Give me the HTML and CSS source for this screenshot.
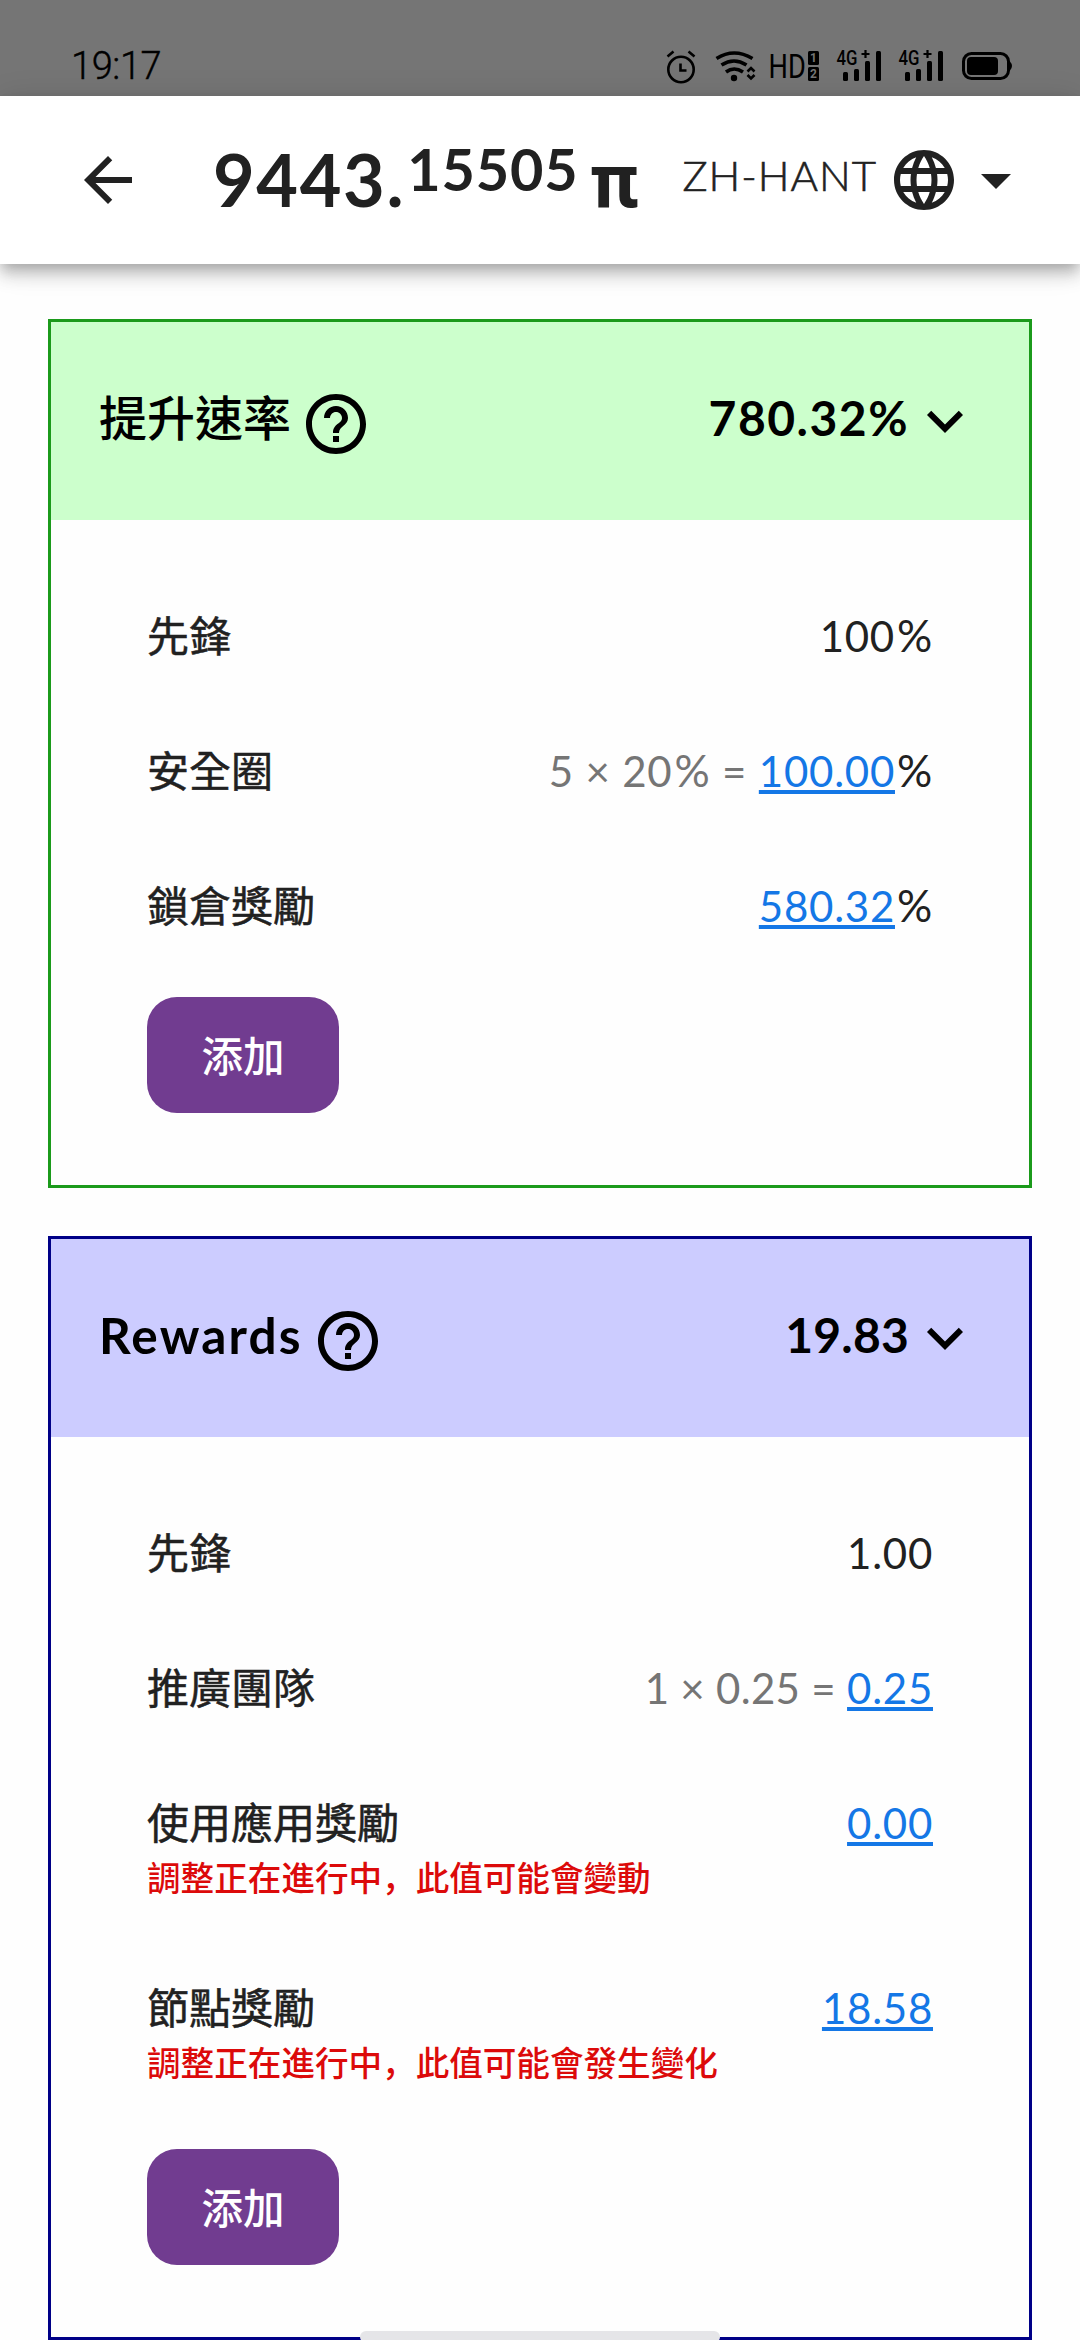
FILE: index.html
```html
<!DOCTYPE html>
<html lang="zh-Hant">
<head>
<meta charset="utf-8">
<title>Pi</title>
<link rel="stylesheet" href="styles.css">
</head>
<body>
<div class="statusbar">
  <span class="clock">19:17</span>
  <svg class="status-icons" viewBox="0 0 350 36" width="350" height="36">
    <!-- alarm -->
    <g fill="none" stroke="#000" stroke-width="2.6">
      <circle cx="18" cy="19.500" r="12.700"/>
      <path d="M17.500 13.500v7h6M4.500 6.500l6-5M31.500 6.500l-6-5"/>
    </g>
    <!-- wifi -->
    <g fill="none" stroke="#000" stroke-width="3.600">
      <path d="M53.500 8.500q17.500-11 36 0M58.500 15q12.500-8 25 0M63 22q8-6 17 0"/>
      <path d="M84.500 21.500l3.500-3.500 3.500 3.500M84.500 25l3.500 3.500 3.500-3.500" stroke-width="2.600"/>
    </g>
    <circle cx="71" cy="28" r="3.200"/>
    <!-- HD with SIM numbers -->
    <text class="hd" transform="translate(105.500 28) scale(.8 1)">HD</text>
    <rect x="145" y="1" width="11" height="14" rx="1.500"/>
    <rect x="145" y="17" width="11" height="14" rx="1.500"/>
    <text class="sim" x="150.500" y="12.300">1</text>
    <text class="sim" x="150.500" y="28.300">2</text>
    <!-- signal -->
    <g id="signal">
      <text class="net" transform="translate(173.500 15) scale(.84 1)">4G</text>
      <path d="M198.500 4h8M202.500 0v8" stroke="#000" stroke-width="2.200"/>
      <rect x="180" y="22" width="5" height="9" rx="1.500"/>
      <rect x="191" y="19" width="5" height="12" rx="1.500"/>
      <rect x="202" y="11" width="5" height="20" rx="1.500"/>
      <rect x="213" y="1" width="5" height="30" rx="1.500"/>
    </g>
    <use href="#signal" x="62"/>
    <!-- battery -->
    <rect x="300.500" y="3.500" width="45" height="25" rx="8" fill="none" stroke="#000" stroke-width="3"/>
    <rect x="304" y="7" width="31" height="18" rx="4"/>
    <path d="M347 11.500q4 4.500 0 9z"/>
  </svg>
</div>

<header class="appbar">
  <svg class="icon" viewBox="0 0 24 24"><path d="M20 11H7.830l5.590-5.590L12 4l-8 8 8 8 1.410-1.410L7.830 13H20v-2z"/></svg>
  <div class="balance"><span class="whole">9443.</span><span class="fraction">15505</span><span class="pi">π</span></div>
  <div class="language">
    <span class="code">ZH-HANT</span>
    <svg class="icon" viewBox="0 0 24 24"><path d="M11.990 2C6.470 2 2 6.480 2 12s4.470 10 9.990 10C17.520 22 22 17.520 22 12S17.520 2 11.990 2zm6.930 6h-2.950c-.320-1.250-.780-2.450-1.380-3.560 1.840.630 3.370 1.910 4.330 3.560zM12 4.040c.830 1.200 1.480 2.530 1.910 3.960h-3.820c.430-1.430 1.080-2.760 1.910-3.960zM4.260 14C4.100 13.360 4 12.690 4 12s.100-1.360.260-2h3.380c-.080.660-.140 1.320-.140 2s.060 1.340.140 2H4.260zm.820 2h2.950c.320 1.250.780 2.450 1.380 3.560-1.840-.630-3.370-1.900-4.330-3.560zm2.950-8H5.080c.960-1.660 2.490-2.930 4.330-3.560C8.810 5.550 8.350 6.750 8.030 8zM12 19.960c-.830-1.200-1.480-2.530-1.910-3.960h3.820c-.430 1.430-1.080 2.760-1.910 3.960zM14.340 14H9.660c-.090-.660-.160-1.320-.160-2s.070-1.350.160-2h4.680c.090.650.160 1.320.160 2s-.070 1.340-.160 2zm.250 5.560c.600-1.110 1.060-2.310 1.380-3.560h2.950c-.960 1.650-2.490 2.930-4.330 3.560zM16.360 14c.080-.660.140-1.320.140-2s-.060-1.340-.140-2h3.380c.160.640.260 1.310.260 2s-.100 1.360-.260 2h-3.380z"/></svg>
    <svg class="icon" viewBox="0 0 24 24"><path d="M7 10l5 5 5-5z"/></svg>
  </div>
</header>

<main class="cards">
  <section class="card card-rate">
    <div class="card-head">
      <h2>提升速率</h2>
      <svg class="icon help" viewBox="0 0 24 24"><path d="M11 18h2v-2h-2v2zm1-16C6.480 2 2 6.480 2 12s4.480 10 10 10 10-4.480 10-10S17.520 2 12 2zm0 18c-4.410 0-8-3.590-8-8s3.590-8 8-8 8 3.590 8 8-3.590 8-8 8zm0-14c-2.210 0-4 1.790-4 4h2c0-1.100.900-2 2-2s2 .900 2 2c0 2-3 1.750-3 5h2c0-2.250 3-2.500 3-5 0-2.210-1.790-4-4-4z"/></svg>
      <span class="total">780.32%</span>
      <svg class="icon" viewBox="0 0 24 24"><path d="M16.590 8.590L12 13.170 7.410 8.590 6 10l6 6 6-6z"/></svg>
    </div>
    <div class="card-body">
      <div class="row"><span class="label">先鋒</span><span class="value">100<span class="percent">%</span></span></div>
      <div class="row"><span class="label">安全圈</span><span class="value"><span class="formula">5 × 20<span class="percent">%</span> = </span><a class="link">100.00</a><span class="percent">%</span></span></div>
      <div class="row"><span class="label">鎖倉獎勵</span><span class="value"><a class="link">580.32</a><span class="percent">%</span></span></div>
      <button class="add">添加</button>
    </div>
  </section>

  <section class="card card-rewards">
    <div class="card-head">
      <h2>Rewards</h2>
      <svg class="icon help" viewBox="0 0 24 24"><path d="M11 18h2v-2h-2v2zm1-16C6.480 2 2 6.480 2 12s4.480 10 10 10 10-4.480 10-10S17.520 2 12 2zm0 18c-4.410 0-8-3.590-8-8s3.590-8 8-8 8 3.590 8 8-3.590 8-8 8zm0-14c-2.210 0-4 1.790-4 4h2c0-1.100.900-2 2-2s2 .900 2 2c0 2-3 1.750-3 5h2c0-2.250 3-2.500 3-5 0-2.210-1.790-4-4-4z"/></svg>
      <span class="total">19.83</span>
      <svg class="icon" viewBox="0 0 24 24"><path d="M16.590 8.590L12 13.170 7.410 8.590 6 10l6 6 6-6z"/></svg>
    </div>
    <div class="card-body">
      <div class="row"><span class="label">先鋒</span><span class="value">1.00</span></div>
      <div class="row"><span class="label">推廣團隊</span><span class="value"><span class="formula">1 × 0.25 = </span><a class="link">0.25</a></span></div>
      <div class="row"><span class="label">使用應用獎勵</span><span class="value"><a class="link">0.00</a></span><p class="note" lang="zh-Hans">調整正在進行中，此值可能會變動</p></div>
      <div class="row"><span class="label">節點獎勵</span><span class="value"><a class="link">18.58</a></span><p class="note" lang="zh-Hans">調整正在進行中，此值可能會發生變化</p></div>
      <button class="add">添加</button>
    </div>
  </section>
</main>
<div class="home-indicator"></div>
</body>
</html>
```

FILE: styles.css
```css
* { box-sizing: border-box; margin: 0; padding: 0; }

body {
  width: 1080px;
  height: 2340px;
  overflow: hidden;
  background: #fefefe;
  color: #212121;
  font-family: Lato, "Noto Sans CJK SC", sans-serif;
  font-size: 42px;
}

.icon { width: 72px; height: 72px; flex: none; fill: currentColor; display: block; }

.statusbar {
  height: 96px;
  padding: 34px 67px 0 71px;
  background: #757575;
  color: #000;
  display: flex;
  justify-content: space-between;
}
.clock { font-family: Roboto, sans-serif; font-size: 38px; font-weight: 300; line-height: 62px; letter-spacing: -.400px; padding-top: 1px; -webkit-text-stroke: .4px currentColor; }
.status-icons { margin-top: 16px; overflow: visible; }
.hd { font: 400 34px Roboto, sans-serif; }
.net { font: 500 20px Roboto, sans-serif; }
.sim { font: 700 12px Roboto, sans-serif; fill: #757575; text-anchor: middle; }

.appbar {
  position: relative;
  height: 168px;
  padding: 0 48px 0 72px;
  display: flex;
  align-items: center;
  background: #fff;
  box-shadow: 0 6px 12px -3px rgba(0,0,0,.2), 0 12px 15px 0 rgba(0,0,0,.14), 0 3px 30px 0 rgba(0,0,0,.12);
}
.balance {
  display: flex;
  align-items: baseline;
  margin-left: 69px;
  font-weight: 700;
  font-size: 72px;
  line-height: 96px;
  letter-spacing: 1.600px;
}
.fraction { font-size: 57.600px; line-height: 60px; letter-spacing: .900px; margin-left: 2px; transform: translateY(-16px); }
.pi { margin-left: 11px; font-family: Roboto, sans-serif; font-size: 76px; letter-spacing: 0; }
.language { margin-left: auto; display: flex; align-items: center; }
.code {
  font-weight: 300;
  letter-spacing: 1px;
  line-height: 60px;
  margin: -10px 11px 0 0;
  -webkit-text-stroke: .6px currentColor;
}

.cards { padding: 55px 48px 0; display: flex; flex-direction: column; gap: 48px; }
.card { border: 3px solid; background: #fefefe; }
.card-rate { border-color: #1b9a1b; }
.card-rewards { border-color: #000087; }
.card-head {
  height: 198px;
  padding: 0 48px;
  display: flex;
  align-items: center;
  color: #000;
  font-size: 48px;
  font-weight: 700;
}
.card-rate .card-head { background: #ccffcc; }
.card-rewards .card-head { background: #ccccff; }
.card-head h2 { font-size: 48px; line-height: 60px; margin-top: -6px; }
.card-rate h2 { font-weight: 500; }
.card-rewards h2 { font-size: 49.500px; font-weight: 700; letter-spacing: 2.200px; }
.help { margin: 6px 0 0 9px; }
.total { margin-left: auto; line-height: 60px; letter-spacing: .200px; margin-top: -6px; }
.card-rate .total { letter-spacing: 1.500px; }

.card-body { padding: 86px 96px 72px; }
.row {
  display: grid;
  grid-template-columns: 1fr auto;
  line-height: 60px;
  margin-bottom: 75px;
}
.label { -webkit-text-stroke: .5px currentColor; }
.value { letter-spacing: .740px; white-space: pre; }
.formula { color: #757575; letter-spacing: .300px; }
.card-rate .formula { letter-spacing: .800px; }
.percent { font-size: 44px; line-height: 1; padding-left: 2px; }
.link {
  color: #1477e6;
  text-decoration: underline;
  text-decoration-thickness: 4px;
  text-underline-offset: 3px;
  text-decoration-skip-ink: none;
}
.note { grid-column: 1 / -1; color: #dc0a0a; font-size: 33.600px; font-weight: 500; line-height: 50px; }
.add {
  display: block;
  width: 192px;
  height: 116px;
  margin-top: -14px;
  padding-bottom: 3px;
  border: 0;
  border-radius: 30px;
  background: #713c90;
  color: #fff;
  font: 500 41.500px "Noto Sans CJK SC", sans-serif;
}

.home-indicator {
  position: absolute;
  left: 360px;
  top: 2331px;
  width: 360px;
  height: 12px;
  border-radius: 6px;
  background: #e5e5e8;
}
```
